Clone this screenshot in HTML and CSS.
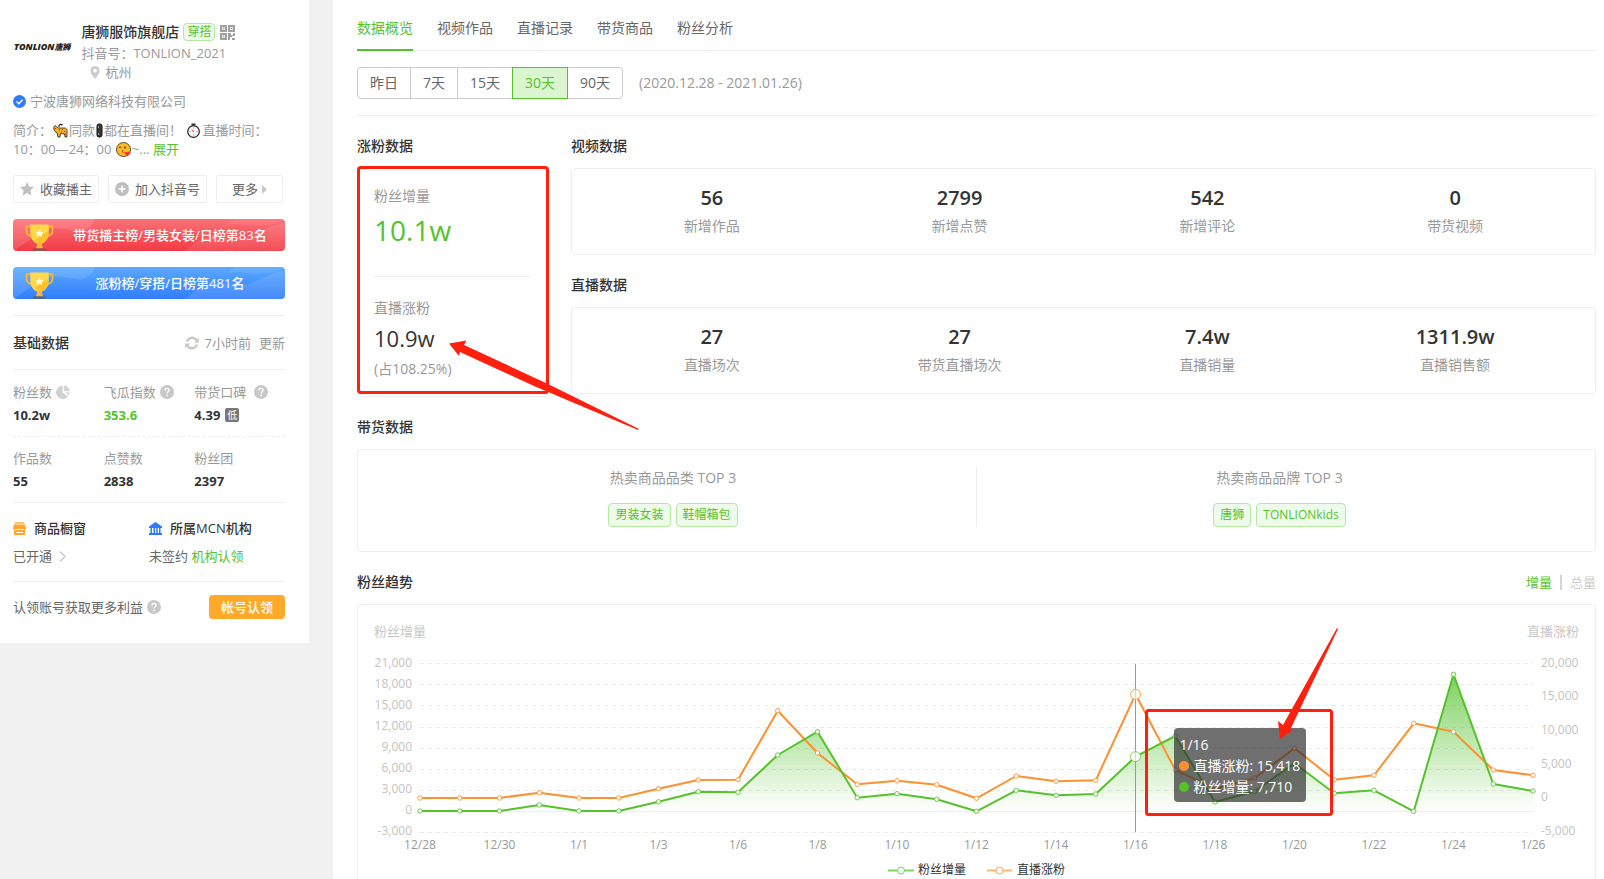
FILE: index.html
```html
<!DOCTYPE html>
<html lang="zh-CN">
<head>
<meta charset="utf-8">
<title>唐狮服饰旗舰店 - 数据概览</title>
<link rel="stylesheet" href="styles.css">
</head>
<body>
<svg class="defs" aria-hidden="true">
  <defs>
    <symbol id="help" viewBox="0 0 14 14"><circle cx="7" cy="7" r="7" fill="#c8c8c8"/><path d="M4.900 5.600C4.900 4.200 5.800 3.400 7 3.400s2.100.8 2.100 1.900c0 1.500-2 1.600-2 3.100" fill="none" stroke="#fff" stroke-width="1.300"/><circle cx="7.100" cy="10.300" r=".9" fill="#fff"/></symbol>
    <symbol id="trophy" viewBox="0 0 30 28"><path d="M6 3H1.500v4c0 4 2.500 6 6 6M24 3h4.500v4c0 4-2.500 6-6 6" fill="none" stroke="#ffb62e" stroke-width="1.800"/><path d="M5.500 1h19v9c0 6-4 10.500-9.500 11.500C9.500 20.500 5.500 16 5.500 10z" fill="#ffd94a"/><path d="M18 12l6-4v2c0 6-4 10.500-9 11.500L10 17z" fill="#ffc02e"/><path d="M12.500 21h5l1 5h-7z" fill="#ffb62e"/><path d="M9 26h12l1.500 2h-15z" fill="#6b5a66"/><path d="M15 6l1.300 2.700 2.900.4-2.100 2 .5 2.900-2.600-1.400-2.600 1.400.5-2.900-2.100-2 2.900-.4z" fill="#fff8df"/></symbol>
    <symbol id="waves" viewBox="0 0 272 32" preserveAspectRatio="none"><path d="M0 0h82c-3 8-10 14-20 12S45 8 35 11 10 26 0 32z" fill="#fff" fill-opacity=".12"/><path d="M171 32c10-6 14-14 30-16 12-1 22 4 34 1s24-13 37-13v28z" fill="#fff" fill-opacity=".1"/><path d="M210 8c12-6 22-1 34-1s20-3 28-5V0h-50z" fill="#fff" fill-opacity=".08"/></symbol>
  </defs>
</svg>
<div class="app">
  <aside class="sidebar">
    <header class="profile">
      <div class="brand">TONLION<b>唐狮</b></div>
      <div>
        <div class="name-row">
          <h1 class="name">唐狮服饰旗舰店</h1>
          <span class="tag tag-small">穿搭</span>
          <svg class="qr" viewBox="0 0 15 15"><g fill="#e4e4e4" stroke="#a0a0a0" stroke-width="2"><path d="M1 1h5v5H1zM9 1h5v5H9zM1 9h5v5H1z"/></g><path d="M3 3h1v1H3zM11 3h1v1h-1zM3 11h1v1H3zM8 8h3v2h2V8h2v3h-3v1h-2v3H8zM12 13h3v2h-3z" fill="#a0a0a0"/></svg>
        </div>
        <p class="line">抖音号：TONLION_2021</p>
        <p class="line place"><svg class="pin" viewBox="0 0 10 14"><path fill-rule="evenodd" d="M5 0a5 5 0 0 1 5 5c0 3.500-3 6-5 9-2-3-5-5.500-5-9a5 5 0 0 1 5-5zm0 3a2 2 0 1 0 0 4 2 2 0 0 0 0-4z" fill="#ccc"/></svg>杭州</p>
      </div>
    </header>
    <p class="verified"><svg class="ico13" viewBox="0 0 13 13"><circle cx="6.500" cy="6.500" r="6.500" fill="#2f7cf6"/><path d="M3.500 6.500l2.300 2.200L9.700 4.700" fill="none" stroke="#fff" stroke-width="1.400"/></svg>宁波唐狮网络科技有限公司</p>
    <p class="bio">简介：<svg class="emoji" viewBox="0 0 15 15"><path d="M6 4C5.500 1.500 8 .5 9.500 2.200" fill="none" stroke="#222" stroke-width="1.300"/><path d="M1 3.500l1-1 1.500 1L5 5h6.500c1.500 0 2.500 1 2.500 2.500V14h-2l-.5-3-4-.5-.5 3.500H5l-.8-4L2 8.500.8 6.500z" fill="#fbb01e" stroke="#222" stroke-width=".8"/><path d="M6 7h1M9 6.500h1M8 9h1M11 8.500h1M12 11h1" stroke="#6a3a00"/><circle cx="2.600" cy="5.500" r=".5" fill="#222"/></svg>同款<svg class="emoji emoji-thin" viewBox="0 0 9 15"><rect x="2" y="1" width="5" height="13" rx="2" fill="#3a3a3a" stroke="#111"/><path d="M3.500 3v2M3.500 10v2" stroke="#999"/></svg>都在直播间！ <svg class="emoji" viewBox="0 0 15 15"><circle cx="7.500" cy="8.500" r="5.800" fill="#f7f7f7" stroke="#222" stroke-width="1.200"/><path d="M5.500 1.200h4M7.500 1v2" stroke="#333" stroke-width="1.400"/><path d="M8 9L6 7" stroke="#e33"/><path d="M7.500 4.500v1M7.500 11.500v1M3.500 8.500h1M10.500 8.500h1" stroke="#999"/></svg>直播时间：<br>10：00—24：00 <svg class="emoji" viewBox="0 0 15 15"><circle cx="7.500" cy="7.500" r="7" fill="#fdb92c" stroke="#3b2a00" stroke-width=".8"/><path d="M3 5.800q1-1.300 2.200-.3" fill="none" stroke="#4a2b00"/><circle cx="9" cy="5.500" r=".9" fill="#4a2b00"/><path d="M6 8.500q2 .2.500 1.200 1.500.4 0 1.300" fill="none" stroke="#8a3b00" stroke-width=".8"/><path d="M11.500 14.200L8.500 11.200q0-2.200 3-1 3-1.200 3 1z" fill="#e8382f"/></svg>~... <a class="link" href="#bio">展开</a></p>
    <div class="actions">
      <button type="button" class="btn"><svg class="ico14" viewBox="0 0 14 14"><path d="M7 0l2.100 4.500 4.900.6-3.600 3.400.9 4.900L7 11l-4.300 2.400.9-4.900L0 5.100l4.900-.6z" fill="#bfbfbf"/></svg>收藏播主</button>
      <button type="button" class="btn"><svg class="ico14" viewBox="0 0 14 14"><circle cx="7" cy="7" r="7" fill="#bfbfbf"/><path d="M7 3.500v7M3.500 7h7" stroke="#fff" stroke-width="1.600"/></svg>加入抖音号</button>
      <button type="button" class="btn btn-more">更多<svg class="caret" viewBox="0 0 5 9"><path d="M0 0l5 4.500L0 9z" fill="#c8c8c8"/></svg></button>
    </div>
    <a class="banner banner-red" href="#rank"><svg class="waves"><use href="#waves"/></svg><svg class="trophy"><use href="#trophy"/></svg><span>带货播主榜/男装女装/日榜第83名</span></a>
    <a class="banner banner-blue" href="#rank"><svg class="waves"><use href="#waves"/></svg><svg class="trophy"><use href="#trophy"/></svg><span>涨粉榜/穿搭/日榜第481名</span></a>
    <div class="basic-head">
      <h2 class="title">基础数据</h2>
      <span class="updated"><svg class="ico14" viewBox="0 0 14 14"><g fill="none" stroke="#c8c8c8" stroke-width="2.400"><path d="M2 5.500A5.400 5.400 0 0 1 11.500 4M12 8.500A5.400 5.400 0 0 1 2.500 10"/></g><path d="M13.800 1.500v5H8.800zM.2 12.500V7.500H5.200z" fill="#c8c8c8"/></svg>7小时前</span>
      <a class="refresh" href="#refresh">更新</a>
    </div>
    <dl class="facts">
      <div><dt>粉丝数<svg class="ico14 near" viewBox="0 0 14 14"><path d="M6.500.8v6.700l5.400 4A6.600 6.600 0 1 1 6.500.8z" fill="#d0d0d0"/><path d="M7.800.2a6.200 6.200 0 0 1 6 6H7.800zM9 7.400h4.800a6 6 0 0 1-1.300 2.800z" fill="#d6d6d6"/></svg></dt><dd>10.2w</dd></div>
      <div><dt>飞瓜指数<svg class="ico14 near"><use href="#help"/></svg></dt><dd class="green">353.6</dd></div>
      <div><dt>带货口碑<svg class="ico14 far"><use href="#help"/></svg></dt><dd>4.39<span class="low">低</span></dd></div>
    </dl>
    <dl class="facts facts-last">
      <div><dt>作品数</dt><dd>55</dd></div>
      <div><dt>点赞数</dt><dd>2838</dd></div>
      <div><dt>粉丝团</dt><dd>2397</dd></div>
    </dl>
    <div class="org">
      <div>
        <h3 class="org-title"><svg class="ico13" viewBox="0 0 13 13"><path d="M2 0h9l.7 2H1.300z" fill="#ffc46b"/><path d="M1 2.500h11l1 3.500c0 1-.5 1.500-1 1.700V13H1V7.700C.5 7.500 0 7 0 6z" fill="#ffa62b"/><path d="M1.500 7.500q1.200 1 2.500-.5 1.200 1.200 2.500 0 1.200 1.200 2.500 0 1.200 1.500 2.500.5" fill="none" stroke="#fff" stroke-width=".9"/><path d="M3 10.500h7" stroke="#fff"/></svg>商品橱窗</h3>
        <p><a class="plain" href="#shop">已开通<svg class="chev" viewBox="0 0 7 11"><path d="M1 .5l5 5-5 5" fill="none" stroke="#999"/></svg></a></p>
      </div>
      <div>
        <h3 class="org-title"><svg class="ico13" viewBox="0 0 13 13"><path d="M6.500 0L13 4.500V6H0V4.500zM1.500 6H3v5H1.500zM4.500 6H6v5H4.500zM7.200 6h1.500v5H7.200zM10 6h1.500v5H10zM0 11h13v2H0z" fill="#2f7cf6"/></svg>所属MCN机构</h3>
        <p>未签约 <a class="link" href="#claim">机构认领</a></p>
      </div>
    </div>
    <div class="claim"><span>认领账号获取更多利益<svg class="ico14 near"><use href="#help"/></svg></span><button type="button" class="claim-btn">帐号认领</button></div>
  </aside>

  <main class="main">
    <nav class="tabs">
      <a class="tab tab-on" href="#overview">数据概览</a>
      <a class="tab" href="#videos">视频作品</a>
      <a class="tab" href="#lives">直播记录</a>
      <a class="tab" href="#goods">带货商品</a>
      <a class="tab" href="#fans">粉丝分析</a>
    </nav>
    <div class="filters">
      <div class="range">
        <button type="button">昨日</button><button type="button">7天</button><button type="button">15天</button><button type="button" class="range-on">30天</button><button type="button">90天</button>
      </div>
      <span class="dates">(2020.12.28 - 2021.01.26)</span>
    </div>

    <div class="overview">
      <section class="growth">
        <h2 class="title">涨粉数据</h2>
        <div class="card growth-card">
          <p class="muted">粉丝增量</p>
          <p class="big">10.1w</p>
          <hr class="rule">
          <p class="muted">直播涨粉</p>
          <p class="mid">10.9w</p>
          <p class="muted">(占108.25%)</p>
          <div class="mark"></div>
          <svg class="arrow" viewBox="0 0 192 92"><path d="M0 3.500L17.500 .5 15 5 99 44 190 89 189 90 85 46 11 12 10 16z" fill="#ff2010"/></svg>
        </div>
      </section>
      <div class="metrics">
        <section>
          <h2 class="title">视频数据</h2>
          <dl class="card stats">
            <div><dt>新增作品</dt><dd>56</dd></div>
            <div><dt>新增点赞</dt><dd>2799</dd></div>
            <div><dt>新增评论</dt><dd>542</dd></div>
            <div><dt>带货视频</dt><dd>0</dd></div>
          </dl>
        </section>
        <section>
          <h2 class="title">直播数据</h2>
          <dl class="card stats">
            <div><dt>直播场次</dt><dd>27</dd></div>
            <div><dt>带货直播场次</dt><dd>27</dd></div>
            <div><dt>直播销量</dt><dd>7.4w</dd></div>
            <div><dt>直播销售额</dt><dd>1311.9w</dd></div>
          </dl>
        </section>
      </div>
    </div>

    <section>
      <h2 class="title">带货数据</h2>
      <div class="card hot">
        <div class="hot-left"><p>热卖商品品类 TOP 3</p><div class="tags"><span class="tag">男装女装</span><span class="tag">鞋帽箱包</span></div></div>
        <div class="hot-right"><p>热卖商品品牌 TOP 3</p><div class="tags"><span class="tag">唐狮</span><span class="tag">TONLIONkids</span></div></div>
      </div>
    </section>

    <section class="trend">
      <div class="trend-head">
        <h2 class="title">粉丝趋势</h2>
        <div class="switch"><button type="button" class="switch-on">增量</button><i></i><button type="button">总量</button></div>
      </div>
      <div class="card chart-card">
        <div class="chart">
          <svg class="plot" viewBox="0 0 1237 274">
            <defs>
              <linearGradient id="fill" gradientUnits="userSpaceOnUse" x1="0" y1="69" x2="0" y2="206"><stop offset="0" stop-color="#55c22b" stop-opacity=".75"/><stop offset="1" stop-color="#55c22b" stop-opacity="0"/></linearGradient>
              <marker id="dotG" viewBox="0 0 8 8" refX="4" refY="4" markerWidth="8" markerHeight="8" markerUnits="userSpaceOnUse"><circle cx="4" cy="4" r="2.200" fill="#fff" stroke="#6ccb47"/></marker>
              <marker id="dotO" viewBox="0 0 8 8" refX="4" refY="4" markerWidth="8" markerHeight="8" markerUnits="userSpaceOnUse"><circle cx="4" cy="4" r="2.200" fill="#fff" stroke="#ff9d45"/></marker>
            </defs>
            <g class="axis-name"><text x="16" y="31">粉丝增量</text><text x="1221" y="31" text-anchor="end">直播涨粉</text></g>
            <path class="grid" d="M62 58.500H1175M62 79.500H1175M62 100.500H1175M62 122.500H1175M62 143.500H1175M62 164.500H1175M62 185.500H1175M62 227.500H1175"/>
            <path class="zero" d="M62 206.500H1175"/>
            <g class="axis" text-anchor="end"><text x="54" y="62">21,000</text><text x="54" y="83">18,000</text><text x="54" y="104">15,000</text><text x="54" y="125">12,000</text><text x="54" y="146">9,000</text><text x="54" y="167">6,000</text><text x="54" y="188">3,000</text><text x="54" y="209">0</text><text x="54" y="230">-3,000</text></g>
            <g class="axis"><text x="1183" y="62">20,000</text><text x="1183" y="95">15,000</text><text x="1183" y="129">10,000</text><text x="1183" y="163">5,000</text><text x="1183" y="196">0</text><text x="1183" y="230">-5,000</text></g>
            <g class="days"><text x="62" y="244">12/28</text><text x="141.500" y="244">12/30</text><text x="221" y="244">1/1</text><text x="300.500" y="244">1/3</text><text x="380" y="244">1/6</text><text x="459.500" y="244">1/8</text><text x="539" y="244">1/10</text><text x="618.500" y="244">1/12</text><text x="698" y="244">1/14</text><text x="777.500" y="244">1/16</text><text x="857" y="244">1/18</text><text x="936.500" y="244">1/20</text><text x="1016" y="244">1/22</text><text x="1095.500" y="244">1/24</text><text x="1175" y="244">1/26</text></g>
            <path fill="url(#fill)" d="M62 206 141.500 206 181.250 200 221 206 260.750 206 300.500 196.700 340.250 186.700 380 187.300 419.750 150 459.500 126.700 499.250 192.700 539 188.700 578.750 194.300 618.500 206.300 658.250 185.300 698 190.300 737.750 189 777.500 151.700 817.250 131 857 197 896.750 186.300 936.500 158.300 976.250 188.300 1016 185.300 1055.750 206.300 1095.500 69.300 1135.250 179 1175 186V206H62z"/>
            <path d="M777.500 59V227" stroke="#999"/>
            <polyline class="line-o" points="62,193 101.750,193 141.500,193 181.250,187.700 221,193 260.750,193 300.500,183.700 340.250,175 380,174.700 419.750,105.700 459.500,148 499.250,179.300 539,175.700 578.750,179.700 618.500,193.300 658.250,171 698,176.300 737.750,175.300 777.500,89.300 817.250,165 857,184 896.750,173 936.500,143.300 976.250,174.700 1016,170.300 1055.750,118.300 1095.500,126.700 1135.250,165 1175,170.300"/>
            <polyline class="line-g" points="62,206 101.750,206 141.500,206 181.250,200 221,206 260.750,206 300.500,196.700 340.250,186.700 380,187.300 419.750,150 459.500,126.700 499.250,192.700 539,188.700 578.750,194.300 618.500,206.300 658.250,185.300 698,190.300 737.750,189 777.500,151.700 817.250,131 857,197 896.750,186.300 936.500,158.300 976.250,188.300 1016,185.300 1055.750,206.300 1095.500,69.300 1135.250,179 1175,186"/>
            <circle cx="777.500" cy="89.300" r="5" fill="#fff" stroke="#ffa653"/><circle cx="777.500" cy="151.700" r="5" fill="#fff" stroke="#7fd35f"/>
            <path d="M777.500 84.500v10M777.500 147v10" stroke="#999" stroke-opacity=".35"/>
            <path d="M530 265.500h26" stroke="#7fd35f" stroke-width="2"/><circle cx="543" cy="265.500" r="3.500" fill="#fff" stroke="#7fd35f"/>
            <path d="M629 265.500h25" stroke="#ffb675" stroke-width="2"/><circle cx="641.500" cy="265.500" r="3.500" fill="#fff" stroke="#ffa653"/>
            <g class="legend"><text x="560" y="269">粉丝增量</text><text x="659" y="269">直播涨粉</text></g>
          </svg>
          <div class="tooltip"><div>1/16</div><div><i class="dot dot-o"></i>直播涨粉: 15,418</div><div><i class="dot dot-g"></i>粉丝增量: 7,710</div></div>
          <svg class="plot notes" viewBox="0 0 1237 274"><rect x="788.500" y="105.500" width="185" height="104" rx="2" fill="none" stroke="#ff2010" stroke-width="3"/><path d="M922 134L920 116 925 120 979 23 980 24 932 125 936 124z" fill="#ff2010"/></svg>
        </div>
      </div>
    </section>
  </main>
</div>
</body>
</html>
```
FILE: styles.css
```css
* { box-sizing: border-box; }
body, h1, h2, h3, p, dl, dd, dt { margin: 0; }
body {
  background: #f1f1f1;
  color: #333;
  font: 14px/20px "Open Sans", "Noto Sans CJK SC", sans-serif;
}
a { text-decoration: none; }
button { font: inherit; color: inherit; padding: 0; border: 0; background: none; cursor: pointer; }
svg { flex: none; }
.defs { position: absolute; width: 0; height: 0; }
.app { display: flex; align-items: flex-start; gap: 24px; min-height: 100vh; }

/* sidebar */
.sidebar { flex: 0 0 309px; padding: 22px 24px 24px 13px; background: #fff; font-size: 13px; color: #666; }
.profile { display: flex; gap: 11px; color: #999; }
.brand { flex: 0 0 57px; padding: 19px 0 0 1px; font-size: 9px; font-weight: 800; font-style: italic; color: #222; white-space: nowrap; line-height: 12px; }
.brand b { font-size: 8px; }
.name-row { display: flex; align-items: center; gap: 4px; height: 20px; margin-bottom: 2px; }
.name { font-size: 14px; font-weight: 500; color: #333; }
.qr { width: 15px; height: 15px; margin-left: 1px; }
.line { line-height: 19px; }
.place { display: flex; align-items: center; gap: 5px; padding-left: 9px; }
.pin { width: 10px; height: 13px; }
.ico13 { width: 13px; height: 13px; }
.ico14 { width: 14px; height: 14px; }
.verified { display: flex; align-items: center; gap: 4px; margin-top: 9px; color: #999; }
.bio { margin-top: 10px; line-height: 19px; color: #999; white-space: nowrap; }
.emoji { width: 15px; height: 15px; margin: 0 1px; vertical-align: -3px; }
.emoji-thin { width: 9px; margin: 0; }
.link, .green { color: #55c22b; }
.actions { display: flex; justify-content: space-between; margin: 16px 2px 0 0; }
.btn { display: flex; align-items: center; gap: 6px; height: 28px; padding: 0 6px; border: 1px solid #eee; border-radius: 2px; color: #666; }
.btn-more { gap: 4px; padding: 0 15px; }
.caret { width: 5px; height: 9px; }
.banner { position: relative; display: flex; align-items: center; justify-content: center; height: 32px; margin-top: 16px; padding-left: 42px; border-radius: 4px; overflow: hidden; color: #fff; font-weight: 500; }
.banner span { position: relative; }
.banner-red { background: linear-gradient(#fb7277, #f23a45); }
.banner-blue { background: linear-gradient(#5aa9ff, #327dfb); }
.waves { position: absolute; inset: 0; width: 100%; height: 100%; }
.trophy { position: absolute; left: 12px; bottom: 0; width: 29px; height: 28px; }
.basic-head { display: flex; align-items: center; gap: 8px; height: 55px; margin-top: 16px; border: solid #eee; border-width: 1px 0; color: #999; }
.title { font-size: 14px; font-weight: 500; line-height: 20px; color: #333; }
.updated { display: flex; align-items: center; gap: 6px; margin-left: auto; }
.refresh { color: #999; }
.facts { display: grid; grid-template-columns: repeat(3, 1fr); padding: 12px 0 10px; border-bottom: 1px dashed #eee; color: #999; }
.facts-last { padding: 11px 0 10px; border-bottom-style: solid; }
.facts dt, .facts dd { display: flex; align-items: center; white-space: nowrap; }
.facts dd { margin-top: 2px; line-height: 22px; font-weight: 700; color: #333; }
.facts .green { color: #55c22b; }
.near { margin-left: 4px; vertical-align: -2px; }
.far { margin-left: 8px; }
.low { width: 14px; height: 14px; margin-left: 5px; border-radius: 2px; background: #777; color: #fff; font-size: 10px; font-weight: 400; line-height: 14px; text-align: center; }
.org { display: grid; grid-template-columns: 1fr 1fr; padding: 15px 0; border-bottom: 1px solid #eee; }
.org-title { display: flex; align-items: center; gap: 8px; margin-bottom: 8px; font-size: 13px; font-weight: 500; color: #333; }
.plain { display: flex; align-items: center; gap: 7px; color: #666; }
.chev { width: 7px; height: 11px; }
.claim { display: flex; align-items: center; justify-content: space-between; padding-top: 13px; }
.claim-btn { width: 76px; height: 24px; border-radius: 4px; background: #ffaa2b; color: #fff; font-weight: 500; }

/* main */
.main { flex: 1; min-width: 0; min-height: 100vh; padding: 0 8px 0 24px; background: #fff; display: flex; flex-direction: column; }
.tabs { display: flex; gap: 24px; height: 51px; border-bottom: 1px solid #eee; }
.tab { height: 51px; padding-top: 18px; color: #666; }
.tab-on { color: #55c22b; border-bottom: 2px solid #55c22b; }
.filters { display: flex; align-items: center; gap: 16px; padding: 16px 0; border-bottom: 1px solid #eee; }
.range { display: flex; }
.range button { height: 32px; padding: 0 12px; border: 1px solid #ccc; color: #666; }
.range button + button { margin-left: -1px; }
.range button:first-child { border-radius: 4px 0 0 4px; }
.range button:last-child { border-radius: 0 4px 4px 0; }
.range .range-on { position: relative; border-color: #55c22b; background: #dbf5d1; color: #55c22b; }
.dates { color: #999; }
section > .title, .trend-head { margin: 20px 0 12px; }
.card { border: 1px solid #eee; border-radius: 4px; }
.muted { color: #999; }
.overview { display: flex; gap: 22px; }
.growth { flex: 0 0 192px; display: flex; flex-direction: column; }
.growth-card { position: relative; flex: 1; padding: 17px 18px 0 16px; }
.big { margin-top: 4px; font-size: 28px; line-height: 40px; color: #55c22b; }
.rule { height: 1px; margin: 26px 0 21px; border: 0; background: #eee; }
.mid { margin: 4px 0 5px; font-size: 22px; line-height: 32px; }
.mark { position: absolute; inset: -3px -1px 2px -1px; border: 3px solid #ff2010; border-radius: 4px; }
.arrow { position: absolute; left: 91px; top: 171px; width: 192px; height: 92px; z-index: 1; }
.metrics { flex: 1; padding-bottom: 3px; }
.stats { display: grid; grid-template-columns: repeat(4, 1fr); padding: 17px 16px 18px; text-align: center; }
.stats > div { display: flex; flex-direction: column-reverse; gap: 6px; }
.stats dd { font-size: 20px; line-height: 24px; font-weight: 600; }
.stats dt { color: #999; }
.hot { display: grid; grid-template-columns: 1fr 1fr; padding: 17px 1px 24px 0; text-align: center; color: #999; }
.hot > div { height: 60px; padding-top: 1px; }
.hot .hot-left { padding-left: 12px; }
.hot .hot-right { padding-right: 12px; border-left: 1px solid #eee; }
.tags { display: flex; justify-content: center; gap: 5px; margin-top: 15px; }
.tag { height: 24px; padding: 0 6px; border: 1px solid #b2e8a0; border-radius: 4px; background: #eefaea; color: #55c22b; font-size: 12px; line-height: 22px; }
.tag-small { height: 18px; padding: 0 3px; line-height: 16px; }
.trend { flex: 1; display: flex; flex-direction: column; }
.trend-head { display: flex; justify-content: space-between; }
.switch { display: flex; align-items: center; gap: 8px; font-size: 13px; color: #ccc; }
.switch i { width: 2px; height: 15px; background: #d5d5d5; }
.switch-on { color: #55c22b; }
.chart-card { flex: 1; border-bottom: 0; border-radius: 4px 4px 0 0; }
.chart { position: relative; }
.plot { display: block; width: 100%; height: auto; }
.notes { position: absolute; inset: 0; }
.axis-name { font-size: 13px; fill: #c8c8c8; }
.axis { font-size: 12px; fill: #c4c4c4; }
.days { font-size: 12px; fill: #999; text-anchor: middle; }
.legend { font-size: 12px; fill: #333; }
.grid { fill: none; stroke: #eaeaea; stroke-dasharray: 4 4; }
.zero { stroke: #eee; }
.line-o, .line-g { fill: none; stroke-width: 2; stroke-linejoin: round; }
.line-o { stroke: #ff9030; marker: url(#dotO); }
.line-g { stroke: #55c22b; marker: url(#dotG); }
.tooltip { position: absolute; left: 66%; top: 45%; padding: 6px 6px 5px 5px; border-radius: 4px; background: rgba(50, 50, 50, 0.7); color: #fff; line-height: 21px; white-space: nowrap; }
.dot { display: inline-block; width: 10px; height: 10px; margin-right: 4px; border-radius: 50%; }
.dot-o { background: #ff9030; }
.dot-g { background: #55c22b; }
```
